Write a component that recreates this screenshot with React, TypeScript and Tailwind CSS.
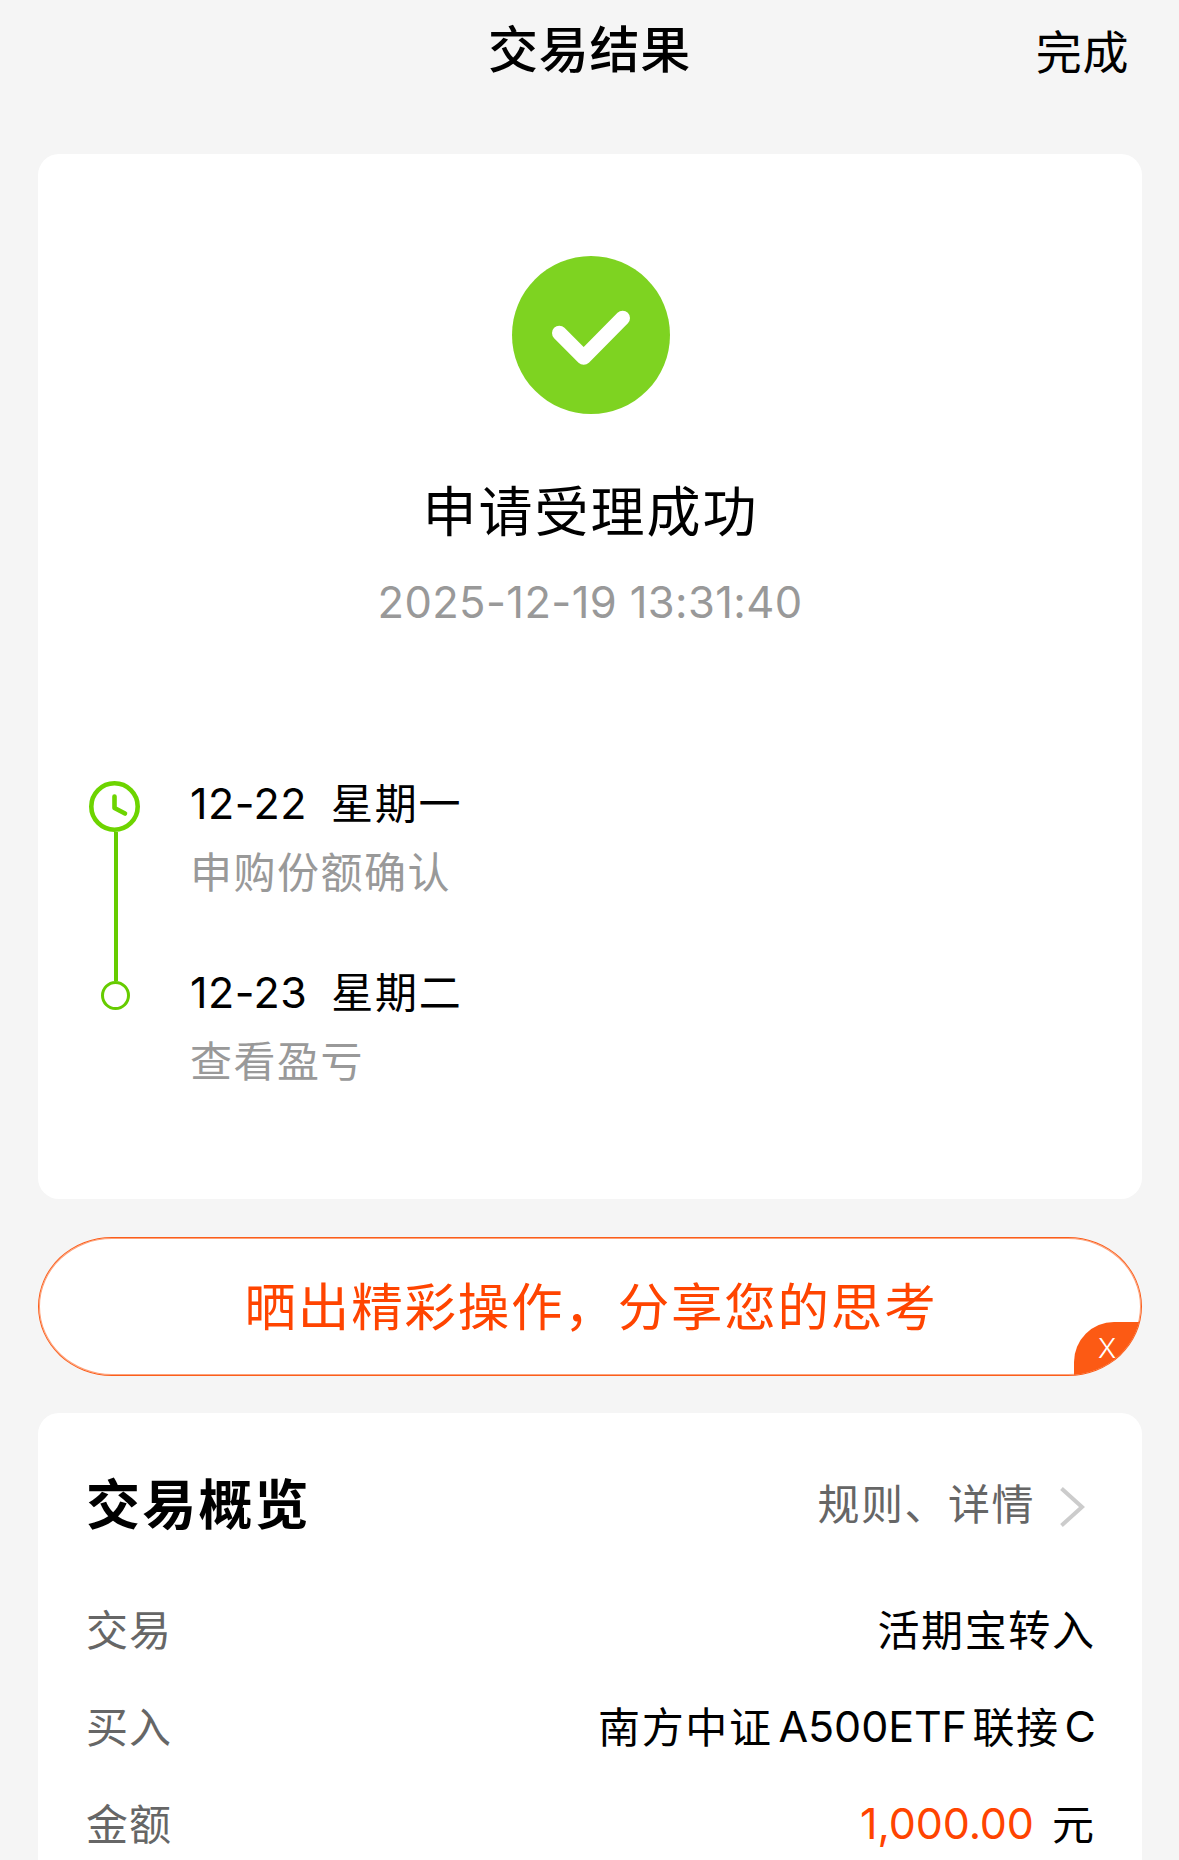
import type { ReactNode } from 'react';

interface Step {
  date: string;
  weekday: string;
  label: string;
}

interface Row {
  label: string;
  value: ReactNode;
}

const STEPS: Step[] = [
  { date: '12-22', weekday: '星期一', label: '申购份额确认' },
  { date: '12-23', weekday: '星期二', label: '查看盈亏' },
];

const ROWS: Row[] = [
  { label: '交易', value: <span className="-mr-[1.5px]">活期宝转入</span> },
  {
    label: '买入',
    value: (
      <>
        南方中证
        <span className="mb-[2px] ml-[6px] mr-[5.5px] text-[43px] tracking-[-0.1px]">A500ETF</span>
        联接
        <span className="mb-[2px] ml-[5px] -mr-[2px] text-[43px] tracking-normal">C</span>
      </>
    ),
  },
  {
    label: '金额',
    value: (
      <>
        <span className="mr-[18px] mb-[2px] text-[43px] tracking-[-0.1px] text-[#ff4400]">1,000.00</span>
        <span className="-mr-[1.5px]">元</span>
      </>
    ),
  },
];

function SuccessIcon() {
  return (
    <svg className="ml-[2px]" width="158" height="158" viewBox="0 0 158 158" fill="none" aria-hidden="true">
      <circle cx="79" cy="79" r="79" fill="#7ed321" />
      <path
        d="M47.3 77 71.7 101.5 110.7 62"
        stroke="#fff"
        strokeWidth="14.6"
        strokeLinecap="round"
        strokeLinejoin="round"
      />
    </svg>
  );
}

function ClockIcon() {
  return (
    <svg width="51" height="51" viewBox="0 0 51 51" fill="none" stroke="#6dd400" aria-hidden="true">
      <circle cx="25.5" cy="25.5" r="23.2" strokeWidth="4.6" />
      <path d="M25.5 15.5V27L36 32.5" strokeWidth="4.6" strokeLinecap="round" strokeLinejoin="round" />
    </svg>
  );
}

function Timeline() {
  return (
    <div className="mt-[150px] flex">
      <div className="ml-[51px] flex w-[51px] flex-col items-center pt-[4px]">
        <ClockIcon />
        <div className="ml-[3px] h-[149px] w-[4px] bg-[#66cc00]" />
        <div className="ml-[2px] size-[29px] rounded-full border-3 border-[#66cc00] bg-white" />
      </div>
      <div className="ml-[50px] flex flex-col gap-[61px]">
        {STEPS.map(step => (
          <div key={step.date} className="text-[42px] tracking-[1.7px]">
            <div className="flex h-[52px] items-center text-black">
              <span className="text-[43px] tracking-[0.5px]">{step.date}</span>
              <span className="mt-[2px] ml-[24px]">{step.weekday}</span>
            </div>
            <div className="mt-[12px] flex h-[64px] items-center tracking-[1.5px] text-[#999999]">{step.label}</div>
          </div>
        ))}
      </div>
    </div>
  );
}

function ShareButton() {
  return (
    <div className="relative mt-[38px] flex h-[139px] items-center justify-center overflow-hidden rounded-[74px/69.5px] border border-[#fb5e1b] bg-white shadow-[inset_0_0_0_1px_#fda27b]">
      <span className="mt-[2px] -mr-[2px] text-[51.5px] tracking-[1.8px] text-[#ff4400]">晒出精彩操作，分享您的思考</span>
      <button
        aria-label="关闭"
        className="absolute -right-[1px] bottom-0 h-[53px] w-[68px] rounded-tl-[40px] bg-[#fc5a14] text-white"
      >
        <span className="absolute top-[8px] left-[24px] text-[27.5px] leading-[36px] font-light">X</span>
      </button>
    </div>
  );
}

function Overview() {
  return (
    <section className="mt-[37px] h-[520px] rounded-[21px] bg-white pt-[60px] pr-[48px] pl-[48px]">
      <div className="flex h-[64px] items-center justify-between">
        <h2 className="mt-[2px] text-[54px] font-bold tracking-[2.2px] text-black">交易概览</h2>
        <div className="flex items-center text-[42px] tracking-[1.5px] text-[#666666]">
          规则、详情
          <svg
            className="mt-[3px] mr-[8px] ml-[24px]"
            width="27"
            height="42"
            viewBox="0 0 27 42"
            fill="none"
            aria-hidden="true"
          >
            <path d="M2.5 2.5 23 21 2.5 39.5" stroke="#cccccc" strokeWidth="4" />
          </svg>
        </div>
      </div>
      <div className="mt-[45px]">
        {ROWS.map(row => (
          <div key={row.label} className="flex h-[97px] items-center justify-between text-[42px] tracking-[1.6px]">
            <span className="tracking-[1px] text-[#666666]">{row.label}</span>
            <span className="flex items-center text-black">{row.value}</span>
          </div>
        ))}
      </div>
    </section>
  );
}

export default function App() {
  return (
    <div className="h-[1860px] w-[1179px] overflow-hidden bg-[#f5f5f5] pr-[37px] pl-[38px] font-['Inter','Noto_Sans_CJK_SC',sans-serif] leading-none">
      <header className="relative flex h-[154px] justify-center pt-[20px] text-black">
        <h1 className="h-[60px] pr-[1px] text-[50px] leading-[60px] font-medium tracking-[0.8px]">交易结果</h1>
        <button className="absolute top-[22px] right-[13px] text-[46px] leading-[60px] tracking-[0.6px]">完成</button>
      </header>

      <section className="h-[1045px] rounded-[21px] bg-white pt-[102px]">
        <div className="flex flex-col items-center">
          <SuccessIcon />
          <div className="mt-[67px] h-[64px] pl-[1px] text-[54px] leading-[64px] tracking-[2px] text-black">
            申请受理成功
          </div>
          <div className="mt-[32px] h-[50px] text-[43.5px] leading-[50px] tracking-[0.38px] text-[#999999]">
            2025-12-19 13:31:40
          </div>
        </div>
        <Timeline />
      </section>

      <ShareButton />
      <Overview />
    </div>
  );
}
